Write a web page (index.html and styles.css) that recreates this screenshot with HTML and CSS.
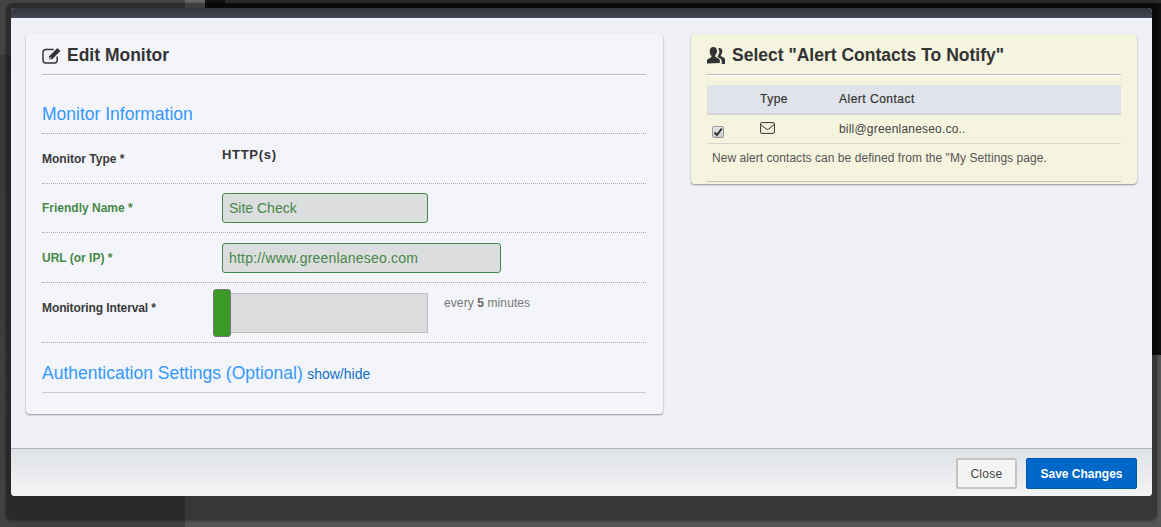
FILE: index.html
```html
<!DOCTYPE html>
<html lang="en">
<head>
<meta charset="utf-8">
<title>Edit Monitor</title>
<link rel="stylesheet" href="styles.css">
</head>
<body>
<div class="backdrop">
  <div class="bg-side"></div>
  <div class="bg-gutter"></div>
  <div class="bg-main">
    <div class="bg-topbar"></div>
    <div class="bg-dark"></div>
    <div class="bg-rest"></div>
  </div>
</div>
<div class="modal-frame">
  <div class="modal">
    <div class="modal-head"></div>
    <div class="modal-body">
      <section class="panel panel-left">
        <h2 class="panel-title">
          <svg class="icon-edit" viewBox="0 0 20 17" width="20" height="17" aria-hidden="true">
            <path d="M15.2 9.5v3.8a2.6 2.6 0 0 1-2.6 2.6H3.6A2.6 2.6 0 0 1 1 13.3V5.2a2.6 2.6 0 0 1 2.6-2.6h8.2" fill="none" stroke="#333" stroke-width="1.5"/>
            <path d="M7.2 9.2 15.4 1l3 3-8.200 8.200H7.200z" fill="#333"/>
            <path d="M8.300 10.200v1h1" fill="none" stroke="#f4f5fa" stroke-width=".8"/>
          </svg>
          <span>Edit Monitor</span>
        </h2>
        <h3 class="section-title first">Monitor Information</h3>
        <div class="row row-type">
          <div class="label">Monitor Type *</div>
          <div class="static">HTTP(s)</div>
        </div>
        <div class="row row-friendly ok">
          <div class="label">Friendly Name *</div>
          <div class="field field-name">Site Check</div>
        </div>
        <div class="row row-url ok">
          <div class="label">URL (or IP) *</div>
          <div class="field field-url">http://www.greenlaneseo.com</div>
        </div>
        <div class="row row-interval">
          <div class="label">Monitoring Interval *</div>
          <div class="slider"><div class="handle"></div></div>
          <div class="hint">every <b>5</b> minutes</div>
        </div>
        <div class="auth">
          <span class="section-title">Authentication Settings (Optional)</span>
          <a class="toggle">show/hide</a>
        </div>
      </section>
      <section class="panel panel-right">
        <h2 class="panel-title">
          <svg class="icon-users" viewBox="0 0 20 17" width="20" height="17" aria-hidden="true">
            <path d="M0 16.500v-2.800c0-1.900 3.200-2.500 4.300-3.500.4-.5.300-1-.2-1.700-1-1.200-1.400-2.500-1.400-4.200C2.700 1.500 4.200 0 6.300 0s3.700 1.500 3.700 3.800c0 1.700-.5 3-1.500 4.200-.5.700-.6 1.200-.1 1.700 1.100 1 4.400 1.600 4.400 3.500v2.800z" fill="#333"/>
            <path d="M11.500 1.200c2-.5 3.800.8 3.800 3 0 1.400-.4 2.500-1.200 3.500-.4.600-.5 1-.1 1.500.9.800 4 1.300 4 3v4.800h-3.300v-3.200c0-1.700-1.800-2.500-3.700-3.500-.7-.4-.5-.9 0-1.700 1-1.300 1.300-2.700 1.300-4 0-1-.3-1.700-.8-2.400z" fill="#333"/>
          </svg>
          <span>Select "Alert Contacts To Notify"</span>
        </h2>
        <div class="contacts-head">
          <div class="col-check"></div>
          <div class="col-type">Type</div>
          <div class="col-contact">Alert Contact</div>
        </div>
        <div class="contacts-row">
          <div class="col-check">
            <span class="checkbox">
              <svg viewBox="0 0 10 10" width="10" height="10" aria-hidden="true"><path d="M1.500 5.500 4 8l4.800-6.500" fill="none" stroke="#333" stroke-width="2"/></svg>
            </span>
          </div>
          <div class="col-type">
            <svg class="icon-mail" viewBox="0 0 15 12" width="15" height="12" aria-hidden="true">
              <rect x=".6" y=".6" width="13.800" height="10.800" rx="1.200" fill="none" stroke="#333" stroke-width="1"/>
              <path d="M.8 2.500 6 6.800c.9.700 2.100.7 3 0l5.200-4.300" fill="none" stroke="#333" stroke-width="1"/>
            </svg>
          </div>
          <div class="col-contact">bill@greenlaneseo.co..</div>
        </div>
        <p class="contacts-note">New alert contacts can be defined from the "My Settings page.</p>
      </section>
    </div>
    <div class="modal-foot">
      <button class="btn btn-close" type="button">Close</button>
      <button class="btn btn-save" type="button">Save Changes</button>
    </div>
  </div>
</div>
</body>
</html>
```
FILE: styles.css
```css
* { box-sizing: border-box; }
html, body { margin: 0; padding: 0; width: 1161px; height: 527px; overflow: hidden; }
body { font-family: "Liberation Sans", Arial, sans-serif; color: #333; background: #3c3c3c; position: relative; }

.backdrop { display: flex; width: 1161px; height: 527px; }
.bg-side { width: 185px; background: linear-gradient(#444 0, #444 55px, #383838 55px, #414141 100%); }
.bg-gutter { width: 20px; background: linear-gradient(#666 0, #5f5f5f 8px, #5f5f5f 355px, #555 355px); }
.bg-main { flex: 1; display: flex; flex-direction: column; }
.bg-topbar { height: 3px; background: linear-gradient(90deg, #111 20px, #2a2a2a 20px); }
.bg-dark { height: 352px; background: #0e0f10; }
.bg-rest { flex: 1; background: #555; }

.modal-frame {
  position: absolute; left: 6px; top: 3px; width: 1151px; height: 517px;
  padding: 5px 5px 24px;
  background: rgba(0, 0, 0, .35);
  border-radius: 6px;
  box-shadow: 0 1px 3px rgba(0, 0, 0, .35);
}
.modal { height: 488px; display: flex; flex-direction: column; border-radius: 4px; overflow: hidden; background: #f0f1f7; }
.modal-head { height: 10px; flex: none; background: linear-gradient(#33353f, #434654); }
.modal-body { flex: 1; display: flex; align-items: flex-start; gap: 28px; padding: 16px 15px 0; }
.modal-foot {
  height: 48px; flex: none; display: flex; justify-content: flex-end; align-items: flex-start;
  gap: 9px; padding: 9px 15px 0 0;
  border-top: 1px solid #b2b4bd;
  background: linear-gradient(#dfe2e5, #f3f4f6);
}

.panel { border-radius: 4px; box-shadow: 0 1px 2px rgba(0, 0, 0, .4); padding: 0 16px; }
.panel-left { width: 637px; height: 380px; background: #f4f5fa; padding-right: 17px; }
.panel-right { width: 446px; height: 150px; background: #f5f4df; }

.panel-title {
  display: flex; align-items: center; gap: 5px;
  height: 41px; margin: 0; padding-top: 3px;
  font-size: 17.5px; font-weight: bold; color: #333;
  border-bottom: 1px solid #bcbcbc;
  box-shadow: 0 1px 0 #fff;
}
.icon-edit, .icon-users { flex: none; }

.section-title { font-size: 17.5px; color: #3398ff; font-weight: normal; }
.section-title.first {
  margin: 0; height: 59px; padding-top: 28px; line-height: 22px;
  border-bottom: 1px dotted #aaa;
}

.row { display: flex; align-items: flex-start; border-bottom: 1px dotted #aaa; }
.label { width: 180px; flex: none; font-size: 12px; font-weight: bold; color: #3a3a3a; line-height: 14px; }
.row-type { height: 50px; padding-top: 18px; }
.row-type .static { font-size: 13px; font-weight: bold; color: #333; line-height: 15px; margin-top: -5px; letter-spacing: .7px; }
.row-friendly { height: 49px; padding-top: 9px; }
.row-friendly .label { margin-top: 8px; }
.row-url { height: 50px; padding-top: 10px; }
.row-url .label { margin-top: 8px; }
.ok .label { color: #468847; }
.field {
  height: 30px; border: 1px solid #468847; border-radius: 3px;
  background: #dcdddf; color: #468847;
  font-size: 14px; line-height: 28px; padding-left: 6px;
}
.field-name { width: 206px; }
.field-url { width: 279px; letter-spacing: .2px; }

.row-interval { height: 60px; padding-top: 7px; }
.row-interval .label { width: 171px; margin-top: 11px; letter-spacing: -.1px; }
.slider {
  width: 215px; height: 40px; margin-top: 3px; flex: none;
  background: #dcdcdc; border: 1px solid #bcbcbc; position: relative;
}
.handle {
  position: absolute; left: -1px; top: -5px; width: 18px; height: 48px;
  background: #3a9a27; border: 1px solid #777; border-radius: 3px;
}
.hint { margin: 6px 0 0 16px; font-size: 12px; line-height: 14px; color: #777; letter-spacing: .1px; }
.hint b { color: #666; }

.auth { height: 50px; padding-top: 20px; border-bottom: 1px solid #c8c9cf; line-height: 21px; white-space: nowrap; }
.toggle { font-size: 14px; color: #0e6fc7; }

.contacts-head, .contacts-row { display: flex; font-size: 12px; }
.contacts-head {
  margin-top: 10px; height: 30px; line-height: 29px; font-weight: normal; color: #333;
  background: #e0e3ea; border-bottom: 2px solid #d4d4d6;
  letter-spacing: .5px;
  -webkit-text-stroke: .2px #333;
}
.contacts-row { height: 29px; border-bottom: 1px solid #d9d9d0; color: #444; }
.col-check { width: 53px; flex: none; }
.col-type { width: 79px; flex: none; }
.contacts-row .col-contact { line-height: 29px; letter-spacing: .2px; }
.contacts-row .col-check { padding: 11px 0 0 5px; }
.contacts-row .col-type { padding-top: 7px; }
.checkbox {
  display: flex; align-items: center; justify-content: center;
  width: 12px; height: 12px; border: 1px solid #9a9a9a; border-radius: 2px;
  background: linear-gradient(#e4e4e4, #cfcfcf);
}
.checkbox svg, .icon-mail { display: block; }
.contacts-note {
  height: 38px; margin: 0; padding: 7px 0 0 5px; font-size: 12px; line-height: 14px; color: #555;
  border-bottom: 1px solid #c4c4c4; letter-spacing: .05px;
}

.btn { height: 31px; font-family: inherit; font-size: 12px; border-radius: 2px; padding: 0; }
.btn-close { width: 61px; color: #444; background: #f4f4f4; border: 2px solid #c4c4c4; letter-spacing: .3px; }
.btn-save { width: 111px; color: #fff; font-weight: bold; background: #0068c8; border: 1px solid #0058ad; }
```
